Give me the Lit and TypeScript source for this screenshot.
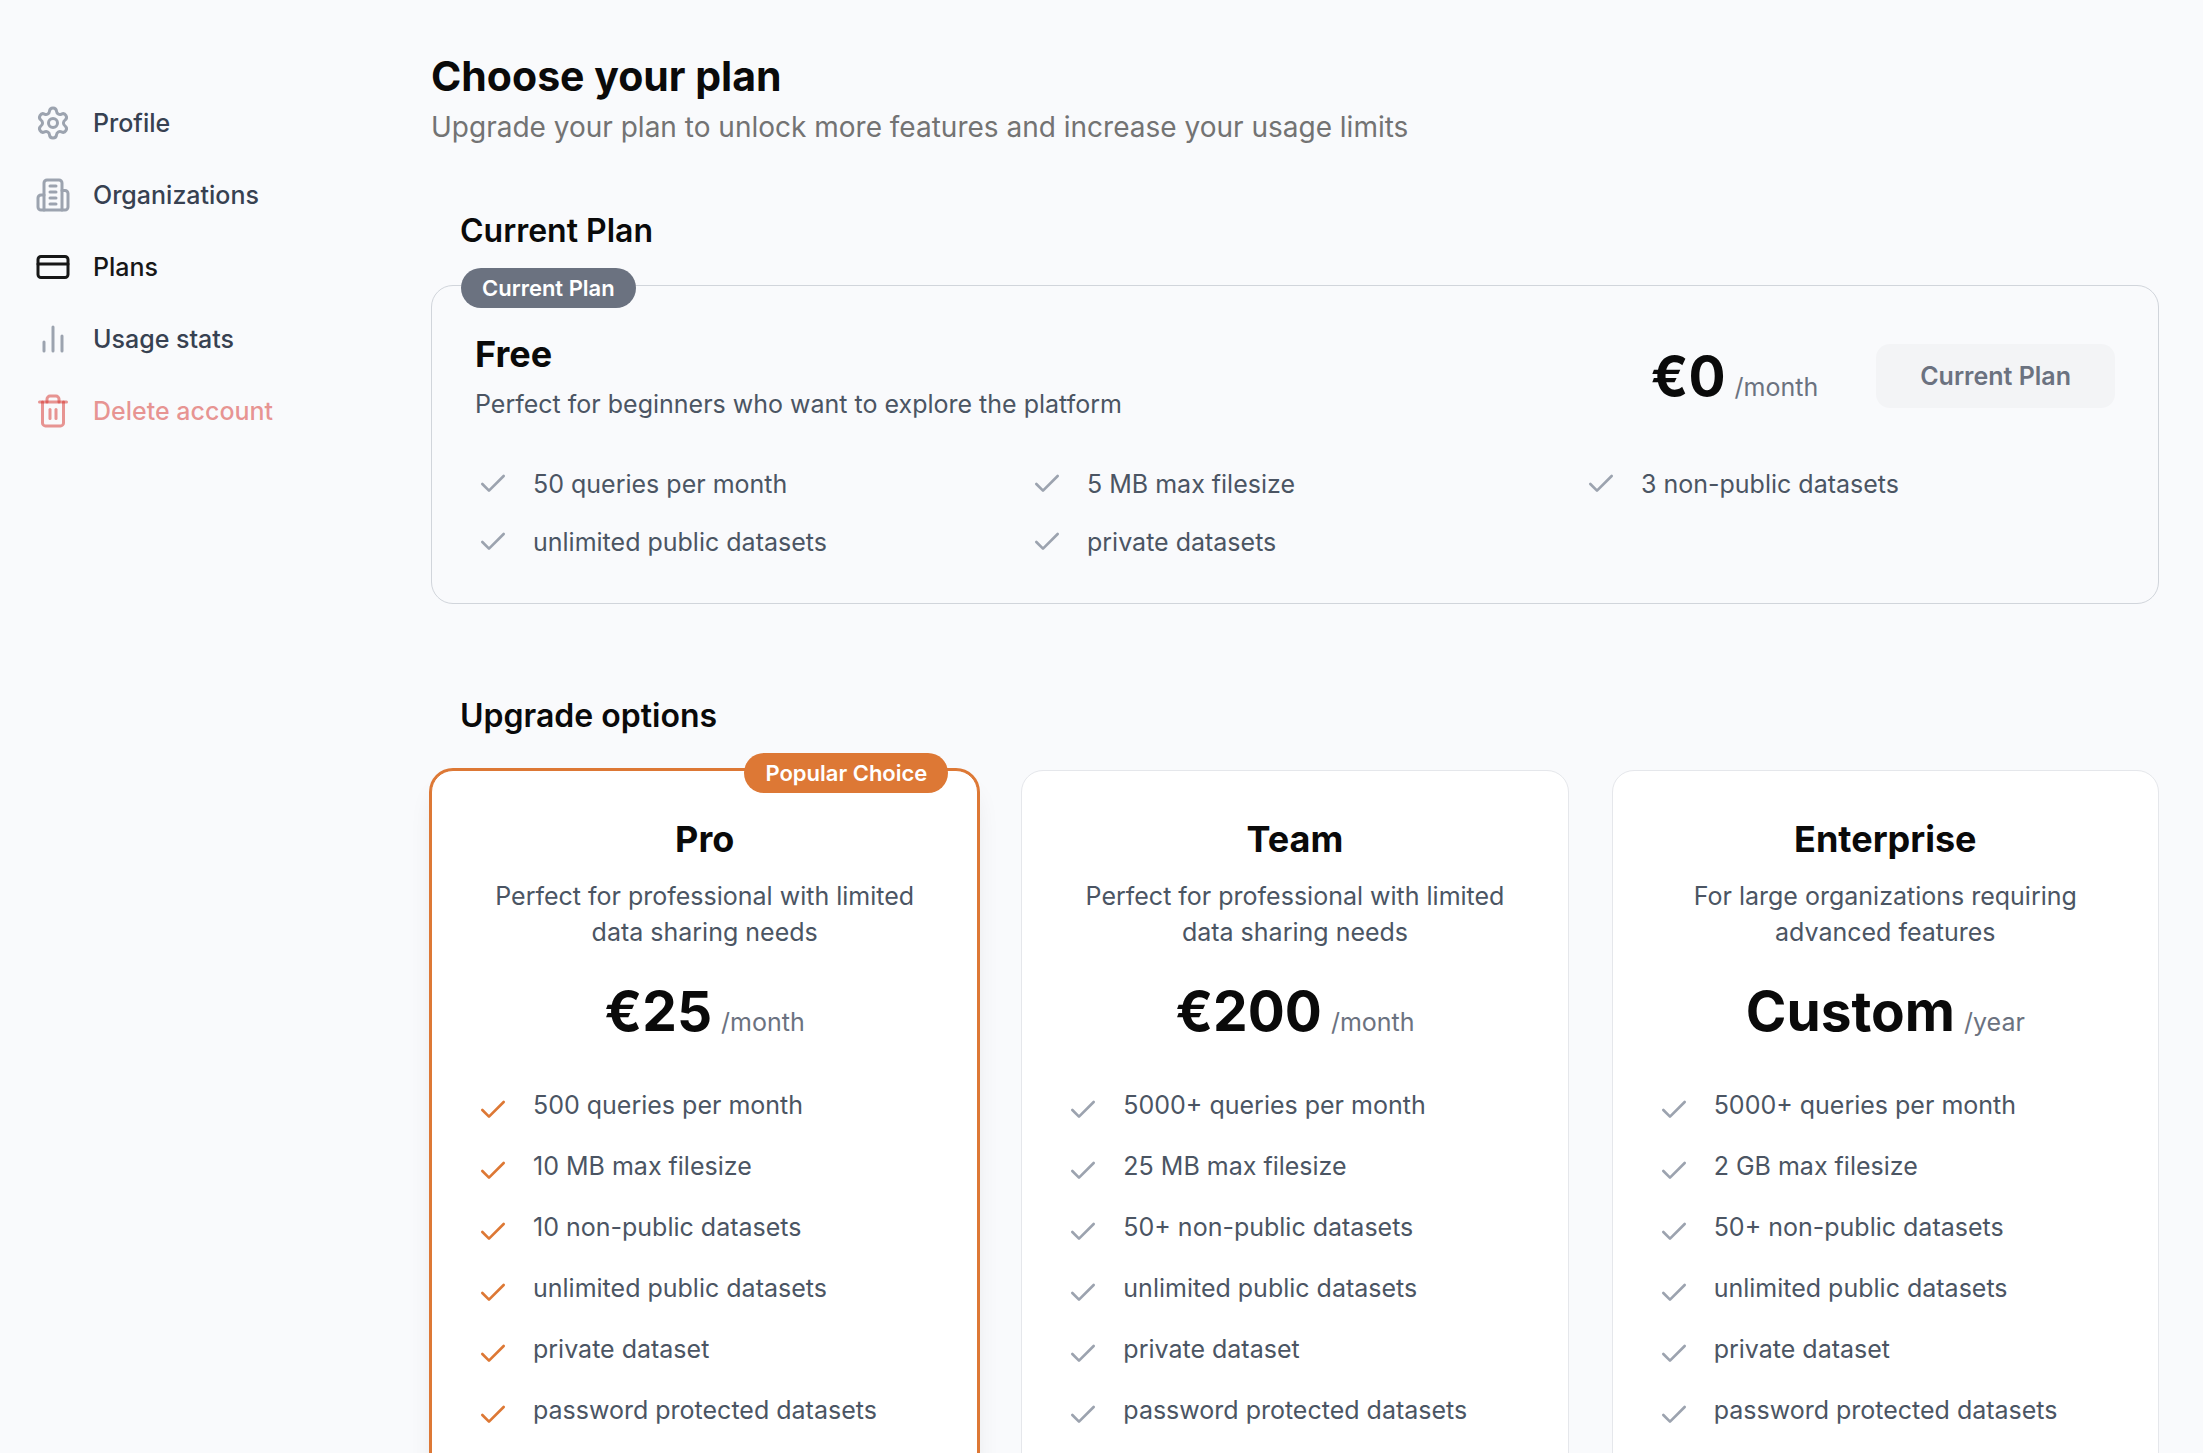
import { LitElement, html, css, svg } from "lit";
import { customElement, property } from "lit/decorators.js";
import { classMap } from "lit/directives/class-map.js";

interface Plan {
  name: string;
  description: string;
  price: string;
  period: string;
  features: string[];
  popular?: boolean;
}

const icons = {
  settings: svg`<path d="M9.671 4.136a2.34 2.34 0 0 1 4.659 0 2.34 2.34 0 0 0 3.319 1.915 2.34 2.34 0 0 1 2.33 4.033 2.34 2.34 0 0 0 0 3.831 2.34 2.34 0 0 1-2.33 4.033 2.34 2.34 0 0 0-3.319 1.915 2.34 2.34 0 0 1-4.659 0 2.34 2.34 0 0 0-3.32-1.915 2.34 2.34 0 0 1-2.33-4.033 2.34 2.34 0 0 0 0-3.831A2.34 2.34 0 0 1 6.35 6.051a2.34 2.34 0 0 0 3.319-1.915"/><circle cx="12" cy="12" r="3"/>`,
  building: svg`<path d="M6 22V4a2 2 0 0 1 2-2h8a2 2 0 0 1 2 2v18Z"/><path d="M6 12H4a2 2 0 0 0-2 2v6a2 2 0 0 0 2 2h2"/><path d="M18 9h2a2 2 0 0 1 2 2v9a2 2 0 0 1-2 2h-2"/><path d="M10 6h4"/><path d="M10 10h4"/><path d="M10 14h4"/><path d="M10 18h4"/>`,
  card: svg`<rect width="20" height="14" x="2" y="5" rx="2"/><path d="M2 10h20"/>`,
  chart: svg`<path d="M18 20V10"/><path d="M12 20V4"/><path d="M6 20v-6"/>`,
  trash: svg`<path d="M3 6h18"/><path d="M19 6v14c0 1-1 2-2 2H7c-1 0-2-1-2-2V6"/><path d="M8 6V4c0-1 1-2 2-2h4c1 0 2 1 2 2v2"/><path d="M10 11v6"/><path d="M14 11v6"/>`,
  check: svg`<path d="M20 6 9 17l-5-5"/>`,
};

const strokeIcon = (name: keyof typeof icons) => html`
  <svg class="icon" viewBox="0 0 24 24" fill="none" stroke="currentColor" stroke-width="2"
    stroke-linecap="round" stroke-linejoin="round" aria-hidden="true">${icons[name]}</svg>`;

const navItems: { label: string; icon: keyof typeof icons; kind?: string }[] = [
  { label: "Profile", icon: "settings" },
  { label: "Organizations", icon: "building" },
  { label: "Plans", icon: "card", kind: "active" },
  { label: "Usage stats", icon: "chart" },
  { label: "Delete account", icon: "trash", kind: "danger" },
];

const currentPlan: Plan = {
  name: "Free",
  description: "Perfect for beginners who want to explore the platform",
  price: "€0",
  period: "/month",
  features: [
    "50 queries per month",
    "5 MB max filesize",
    "3 non-public datasets",
    "unlimited public datasets",
    "private datasets",
  ],
};

const sharedFeatures = ["unlimited public datasets", "private dataset", "password protected datasets"];

const upgrades: Plan[] = [
  {
    name: "Pro",
    description: "Perfect for professional with limited data sharing needs",
    price: "€25",
    period: "/month",
    popular: true,
    features: ["500 queries per month", "10 MB max filesize", "10 non-public datasets", ...sharedFeatures],
  },
  {
    name: "Team",
    description: "Perfect for professional with limited data sharing needs",
    price: "€200",
    period: "/month",
    features: ["5000+ queries per month", "25 MB max filesize", "50+ non-public datasets", ...sharedFeatures],
  },
  {
    name: "Enterprise",
    description: "For large organizations requiring advanced features",
    price: "Custom",
    period: "/year",
    features: ["5000+ queries per month", "2 GB max filesize", "50+ non-public datasets", ...sharedFeatures],
  },
];

const base = css`
  * { box-sizing: border-box; }
  h1, h2, h3, p, ul { margin: 0; padding: 0; }
  ul { list-style: none; }
  .icon { display: block; width: 100%; height: 100%; }
  .name { font-size: 36px; line-height: 50px; font-weight: 700; color: #0a0a0a; }
  .description { font-size: 25px; line-height: 36px; color: #4b5563; }
  .price { display: flex; align-items: baseline; gap: 9px; white-space: nowrap; }
  .amount { font-size: 55px; line-height: 64px; font-weight: 700; color: #0a0a0a; }
  .period { font-size: 25px; line-height: 36px; color: #6b7280; }
  .features { display: grid; margin-top: 44px; }
  .feature { display: flex; gap: 22px; font-size: 25px; line-height: 36px; color: #4b5563; }
  .check { flex: none; width: 36px; height: 36px; padding: 2px; color: #9ca3af; }
  .badge {
    position: absolute;
    padding: 0 21px;
    border-radius: 20px;
    font-size: 22px;
    line-height: 40px;
    font-weight: 600;
    color: #fff;
    white-space: nowrap;
  }
`;

@customElement("side-nav")
export class SideNav extends LitElement {
  static styles = [base, css`
    :host { display: block; }
    .list { display: flex; flex-direction: column; gap: 36px; padding: 105px 35px 0; }
    .link {
      display: flex;
      align-items: center;
      gap: 22px;
      font-size: 25px;
      line-height: 36px;
      font-weight: 500;
      color: #374151;
      text-decoration: none;
    }
    .glyph { width: 36px; height: 36px; color: #9ca3af; }
    .active, .active .glyph { color: #171717; }
    .danger, .danger .glyph { color: rgba(214, 46, 40, 0.5); }
  `];

  render() {
    return html`<nav aria-label="Account"><ul class="list">
      ${navItems.map((item) => html`<li>
        <a href="#" class=${classMap({ link: true, active: item.kind === "active", danger: item.kind === "danger" })}>
          <span class="glyph">${strokeIcon(item.icon)}</span>${item.label}
        </a>
      </li>`)}
    </ul></nav>`;
  }
}

@customElement("current-plan-card")
export class CurrentPlanCard extends LitElement {
  @property({ attribute: false }) plan!: Plan;

  static styles = [base, css`
    :host { display: block; }
    .card { position: relative; border: 1px solid #d1d5db; border-radius: 22px; padding: 43px; }
    .badge { top: -18px; left: 29px; background: #6b7280; }
    .description { margin-top: 7px; }
    .head { display: flex; align-items: center; justify-content: space-between; }
    .offer { display: flex; align-items: center; gap: 58px; }
    .button {
      padding: 0 44px;
      border: 0;
      border-radius: 14px;
      background: #f3f4f6;
      color: #6b7280;
      font: inherit;
      font-size: 25px;
      line-height: 64px;
      font-weight: 600;
    }
    .features { grid-template-columns: repeat(3, 1fr); gap: 22px; }
  `];

  render() {
    const p = this.plan;
    return html`<article class="card">
      <span class="badge">Current Plan</span>
      <div class="head">
        <div>
          <h3 class="name">${p.name}</h3>
          <p class="description">${p.description}</p>
        </div>
        <div class="offer">
          <div class="price"><span class="amount">${p.price}</span><span class="period">${p.period}</span></div>
          <button class="button" type="button" disabled>Current Plan</button>
        </div>
      </div>
      <ul class="features">
        ${p.features.map((f) => html`<li class="feature"><span class="check">${strokeIcon("check")}</span>${f}</li>`)}
      </ul>
    </article>`;
  }
}

@customElement("upgrade-card")
export class UpgradeCard extends LitElement {
  @property({ attribute: false }) plan!: Plan;

  static styles = [base, css`
    :host { display: block; }
    .card {
      position: relative;
      height: 100%;
      padding: 43px 43px 58px;
      border: 1px solid #e5e7eb;
      border-radius: 22px;
      background: #fff;
    }
    .popular {
      border-color: #dd7835;
      box-shadow: 0 0 0 2px #dd7835, 0 18px 27px -5px rgba(0, 0, 0, 0.1), 0 7px 11px -7px rgba(0, 0, 0, 0.1);
    }
    .popular .check { color: #dd7835; }
    .badge { top: -18px; right: 29px; background: #dd7835; }
    .summary { display: flex; flex-direction: column; align-items: center; text-align: center; }
    .description { max-width: 440px; margin-top: 14px; }
    .price { margin-top: 29px; }
    .features { gap: 25px; }
    .check { margin: 5px 0 -5px; }
  `];

  render() {
    const p = this.plan;
    return html`<article class=${classMap({ card: true, popular: !!p.popular })}>
      ${p.popular ? html`<span class="badge">Popular Choice</span>` : null}
      <div class="summary">
        <h3 class="name">${p.name}</h3>
        <p class="description">${p.description}</p>
        <div class="price"><span class="amount">${p.price}</span><span class="period">${p.period}</span></div>
      </div>
      <ul class="features">
        ${p.features.map((f) => html`<li class="feature"><span class="check">${strokeIcon("check")}</span>${f}</li>`)}
      </ul>
    </article>`;
  }
}

@customElement("app-root")
export class AppRoot extends LitElement {
  static styles = [base, css`
    :host {
      display: block;
      height: 100vh;
      overflow: hidden;
      background: #f9fafc;
      font-family: Inter, "Liberation Sans", sans-serif;
    }
    .page { display: grid; grid-template-columns: 431px minmax(0, 1fr); }
    .main { padding: 50px 44px 58px 0; }
    .title { font-size: 41px; line-height: 52px; font-weight: 700; color: #0a0a0a; }
    .lead { font-size: 28px; line-height: 50px; color: #737373; }
    .section { padding-left: 29px; font-size: 32px; line-height: 50px; font-weight: 600; color: #0a0a0a; }
    .current { margin: 54px 0 29px; }
    .upgrade { margin: 87px 0 29px; }
    .plans { display: grid; grid-template-columns: repeat(3, minmax(0, 1fr)); gap: 43px; }
  `];

  render() {
    return html`<div class="page">
      <side-nav></side-nav>
      <main class="main">
        <h1 class="title">Choose your plan</h1>
        <p class="lead">Upgrade your plan to unlock more features and increase your usage limits</p>
        <h2 class="section current">Current Plan</h2>
        <current-plan-card .plan=${currentPlan}></current-plan-card>
        <h2 class="section upgrade">Upgrade options</h2>
        <div class="plans">${upgrades.map((p) => html`<upgrade-card .plan=${p}></upgrade-card>`)}</div>
      </main>
    </div>`;
  }
}
